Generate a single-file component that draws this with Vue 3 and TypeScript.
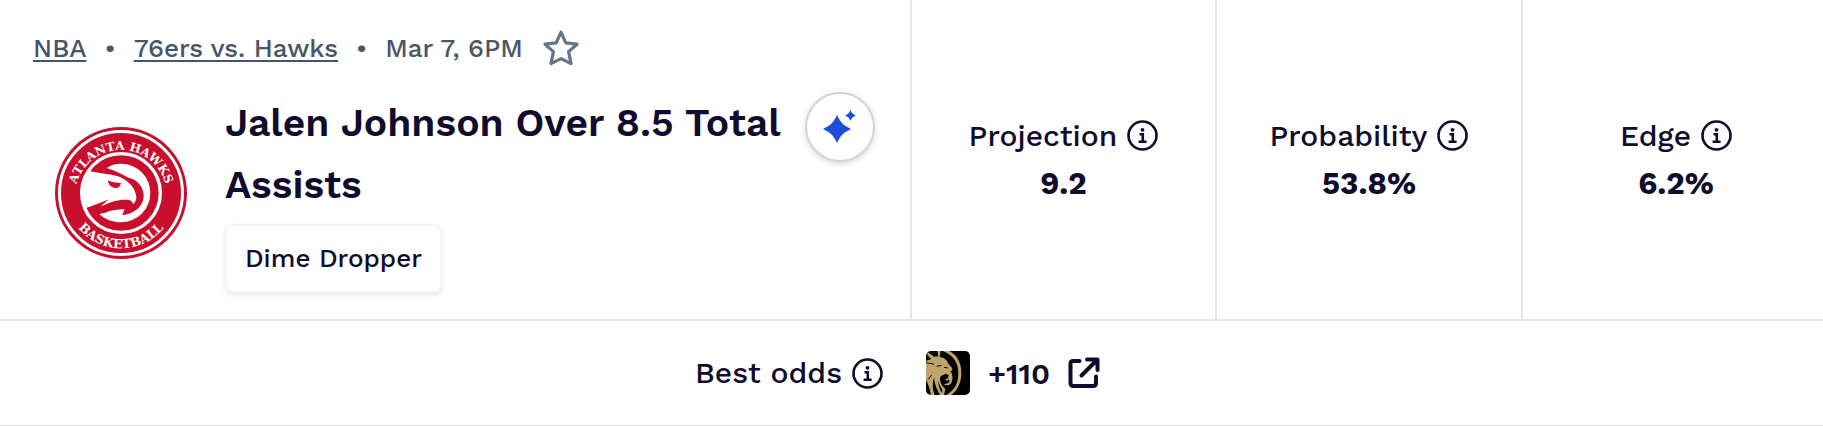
<script setup lang="ts">
interface Stat {
  label: string
  value: string
}

const stats: Stat[] = [
  { label: 'Projection', value: '9.2' },
  { label: 'Probability', value: '53.8%' },
  { label: 'Edge', value: '6.2%' },
]
</script>

<template>
  <main class="card">
    <section class="top">
      <div class="summary">
        <nav class="crumbs" aria-label="Game">
          <a href="#nba">NBA</a>
          <span class="dot">•</span>
          <a href="#game">76ers vs. Hawks</a>
          <span class="dot">•</span>
          <span>Mar 7, 6PM</span>
          <button class="star" type="button" aria-label="Save pick">
            <svg viewBox="0 0 36 36" fill="none" stroke="#64748b" stroke-width="3.2" stroke-linejoin="round">
              <path d="M18 2.200 22.800 12.800 34 14.200 25.600 21.600 28 33.600 18 28.600 8 33.600 10.400 21.600 2 14.200 13.200 12.800Z" />
            </svg>
          </button>
        </nav>

        <div class="pick">
          <svg class="team" viewBox="45 50 396 396" role="img" aria-label="Atlanta Hawks">
            <defs>
              <path id="arc-top" d="M105 257A138 138 0 1 1 381 257" />
              <path id="arc-bottom" d="M77 248A166 166 0 0 0 409 248" />
            </defs>
            <circle cx="243" cy="248" r="198" fill="#c8102e" />
            <circle cx="243" cy="248" r="184.500" fill="none" stroke="#fff" stroke-width="9" />
            <circle cx="243" cy="248" r="118" fill="none" stroke="#fff" stroke-width="10" />
            <path
              fill="#fff"
              d="M150 182C180 190 210 190 234 198C258 207 282 227 287 250C291 263 289 273 279 282C278 272 270 268 257 268C232 268 207 276 184 288C190 278 200 274 208 267C185 275 160 287 138 293L131 292A122 122 0 0 1 143 178Z"
            />
            <path
              fill="#fff"
              d="M200 173C212 164 226 160 243 160A88 88 0 0 1 243 336C218 336 194 327 178 311C200 309 212 296 254 297C250 304 250 309 247 315C278 311 308 293 311 260C313 232 294 208 266 202C244 192 225 180 200 173Z"
            />
            <path fill="#c8102e" d="M203 210C215 216 228 217 243 218C241 230 232 235 222 232C211 230 206 222 203 210Z" />
            <text class="team-text">
              <textPath href="#arc-top" startOffset="50%">ATLANTA HAWKS</textPath>
            </text>
            <text class="team-text wide">
              <textPath href="#arc-bottom" startOffset="50%">BASKETBALL</textPath>
            </text>
          </svg>

          <div class="details">
            <div class="headline">
              <h1>Jalen Johnson Over 8.5 Total Assists</h1>
              <button class="spark" type="button" aria-label="Explain this pick">
                <svg viewBox="0 0 66 66" fill="#1d4ed8">
                  <path d="M30 21C34 29 36 31 44 35C36 39 34 41 30 49C26 41 24 39 16 35C24 31 26 29 30 21Z" />
                  <path d="M43.500 16C45 19.500 46 20 49 21.500C46 23 45 23.500 43.500 27C42 23.500 41 23 38 21.500C41 20 42 19.500 43.500 16Z" />
                </svg>
              </button>
            </div>
            <span class="tag">Dime Dropper</span>
          </div>
        </div>
      </div>

      <div v-for="stat in stats" :key="stat.label" class="stat">
        <div class="label">
          <span>{{ stat.label }}</span>
          <button class="info" type="button" :aria-label="`About ${stat.label}`">
            <svg viewBox="0 0 31 31" fill="none" stroke="#110c2d" stroke-width="2.600">
              <circle cx="15.500" cy="15.500" r="14" />
              <path d="M12.500 14.200H15.800V21.600M11.600 21.800H19.600" />
              <circle cx="15.500" cy="9.800" r="1.900" fill="#110c2d" stroke="none" />
            </svg>
          </button>
        </div>
        <strong>{{ stat.value }}</strong>
      </div>
    </section>

    <section class="odds">
      <div class="label">
        <span>Best odds</span>
        <button class="info" type="button" aria-label="About best odds">
          <svg viewBox="0 0 31 31" fill="none" stroke="#110c2d" stroke-width="2.600">
            <circle cx="15.500" cy="15.500" r="14" />
            <path d="M12.500 14.200H15.800V21.600M11.600 21.800H19.600" />
            <circle cx="15.500" cy="9.800" r="1.900" fill="#110c2d" stroke="none" />
          </svg>
        </button>
      </div>
      <a class="offer" href="#bet">
        <svg class="book" viewBox="0 0 132 132" role="img" aria-label="BetMGM">
          <rect width="132" height="132" fill="#000" />
          <g fill="#bfa46a">
            <path d="M50 0H70C94 12 106 36 106 66C106 94 95 118 76 132H62C88 116 97 94 97 67C97 34 82 12 50 0Z" />
            <path d="M34 0H44L41 18C56 20 64 28 68 40L78 50C81 54 78 60 73 60C80 68 82 84 76 96C70 104 60 105 52 99L61 98L70 94L69 85L63 89L57 86L66 81L68 73L60 68L46 74C38 82 42 98 58 114L54 132H47L49 116C43 108 38 98 37 88C36 104 42 120 52 132H42C30 110 24 94 25 78C18 96 20 115 26 132H15C11 112 6 98 0 88V30L16 24L4 12V2L24 17L37 16Z" />
          </g>
          <path
            d="M0 35C10 38 16 36 24 40M32 46L46 43M54 49L66 51M6 86L17 72"
            fill="none"
            stroke="#000"
            stroke-width="3"
          />
        </svg>
        <span class="price">+110</span>
        <svg class="external" viewBox="0 0 32 32" fill="none" stroke="#110c2d" stroke-width="4" stroke-linecap="round" stroke-linejoin="round">
          <path d="M11.500 4H5Q2.500 4 2.500 6.500V26Q2.500 29 5.500 29H25Q28 29 28 26V19.500M19 2.500H29.500V13M29 3L13.500 18.500" />
        </svg>
      </a>
    </section>
  </main>
</template>

<style>
body {
  margin: 0;
  background: #fff;
}
</style>

<style scoped>
.card {
  font-family: 'Work Sans', Inter, 'Liberation Sans', sans-serif;
  color: #110c2d;
  overflow: hidden;
}
svg {
  display: block;
}
button {
  padding: 0;
  border: 0;
  background: none;
  color: inherit;
  font: inherit;
  cursor: pointer;
}
.top {
  display: grid;
  grid-template-columns: 912fr 305fr 306fr 300fr;
  border-bottom: 2px solid #e5e5ea;
}
.summary {
  padding: 28px 35px 26px 33px;
  border-right: 2px solid #e5e5ea;
}
.crumbs {
  display: flex;
  align-items: center;
  gap: 18px;
  height: 40px;
  font-size: 26px;
  font-weight: 500;
  color: #4b5563;
  white-space: nowrap;
}
.crumbs a {
  color: #475569;
  text-decoration: underline;
  text-decoration-thickness: 2px;
  text-underline-offset: 3px;
}
.star {
  width: 36px;
  margin-left: 2px;
}
.pick {
  display: flex;
  align-items: center;
  gap: 38px;
  padding: 24px 0 0 22px;
}
.team {
  flex: none;
  width: 132px;
}
.team-text {
  font-family: 'DejaVu Serif', serif;
  font-size: 36px;
  font-weight: 700;
  fill: #fff;
  text-anchor: middle;
}
.team-text.wide {
  font-size: 38px;
}
.details {
  flex: 1;
}
.headline {
  display: flex;
  align-items: flex-start;
  justify-content: space-between;
}
h1 {
  flex: 1;
  margin: 0;
  font-size: 39px;
  font-weight: 600;
  line-height: 62px;
}
.spark {
  box-sizing: border-box;
  flex: none;
  width: 70px;
  height: 70px;
  border: 2px solid #cbd5e1;
  border-radius: 50%;
  background: #fff;
  box-shadow: 0 2px 6px rgba(0, 0, 0, 0.15);
}
.tag {
  display: block;
  width: fit-content;
  margin-top: 8px;
  padding: 0 18px;
  border: 2px solid #f3f4f6;
  border-radius: 8px;
  font-size: 26px;
  font-weight: 500;
  line-height: 65px;
  box-shadow: 0 2px 5px rgba(0, 0, 0, 0.1);
}
.stat {
  display: flex;
  flex-direction: column;
  align-items: center;
  justify-content: center;
  border-right: 2px solid #e5e5ea;
}
.stat:last-child {
  padding-left: 6px;
  border-right: 0;
}
.label {
  display: flex;
  align-items: center;
  gap: 10px;
  font-size: 30px;
  font-weight: 500;
  line-height: 48px;
}
.info {
  width: 31px;
}
strong {
  font-size: 31px;
  font-weight: 700;
  line-height: 48px;
}
.odds {
  display: flex;
  align-items: center;
  justify-content: center;
  gap: 43px;
  height: 104px;
  padding-right: 28px;
  border-bottom: 1px solid #e5e5ea;
}
.offer {
  display: flex;
  align-items: center;
  gap: 18px;
  color: inherit;
  text-decoration: none;
}
.book {
  width: 44px;
  border-radius: 5px;
}
.price {
  font-size: 30px;
  font-weight: 600;
}
.external {
  width: 32px;
}
</style>
